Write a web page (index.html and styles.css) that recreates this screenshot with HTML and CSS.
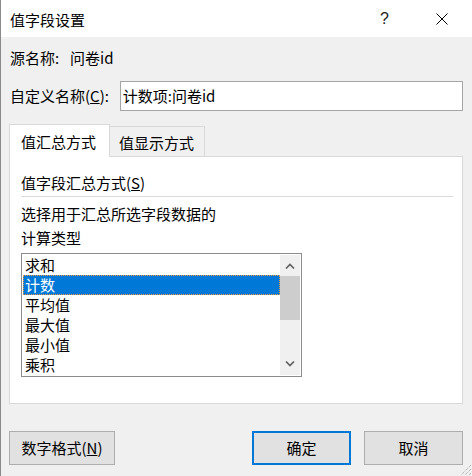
FILE: index.html
```html
<!DOCTYPE html>
<html lang="zh-CN">
<head>
<meta charset="utf-8">
<title>值字段设置</title>
<link rel="stylesheet" href="styles.css">
</head>
<body>
<div class="dialog">
  <div class="titlebar">
    <span class="title">值字段设置</span>
    <span class="help">?</span>
    <svg class="close" width="12" height="12" viewBox="0 0 12 12"><path d="M0.5 0.5 L11.5 11.5 M11.5 0.5 L0.5 11.5" stroke="#000" stroke-width="1" fill="none"/></svg>
  </div>
  <div class="content">
    <div class="src-row"><span class="src-label">源名称:</span><span>问卷id</span></div>
    <div class="name-row">
      <span class="name-label">自定义名称(<u>C</u>):</span>
      <div class="input">计数项:问卷id</div>
    </div>
    <div class="tabs">
      <div class="tab active">值汇总方式</div>
      <div class="tab inactive">值显示方式</div>
    </div>
    <div class="panel">
      <div class="sec">值字段汇总方式(<u>S</u>)</div>
      <div class="sep"></div>
      <div class="desc">选择用于汇总所选字段数据的<br>计算类型</div>
      <div class="listbox">
        <div class="items">
          <div class="item">求和</div>
          <div class="item selected">计数</div>
          <div class="item">平均值</div>
          <div class="item">最大值</div>
          <div class="item">最小值</div>
          <div class="item">乘积</div>
        </div>
        <div class="scrollbar">
          <div class="arrow up"><svg width="10" height="6" viewBox="0 0 10 6"><path d="M1 5.5 L5 1.5 L9 5.5" stroke="#606060" stroke-width="1.6" fill="none"/></svg></div>
          <div class="thumb"></div>
          <div class="track"></div>
          <div class="arrow down"><svg width="10" height="6" viewBox="0 0 10 6"><path d="M1 0.5 L5 4.5 L9 0.5" stroke="#606060" stroke-width="1.6" fill="none"/></svg></div>
        </div>
      </div>
    </div>
    <div class="buttons">
      <button class="btn fmt">数字格式(<u>N</u>)</button>
      <div class="btn-group">
        <button class="btn ok">确定</button>
        <button class="btn cancel">取消</button>
      </div>
    </div>
  </div>
  <svg class="grip" width="12" height="12" viewBox="0 0 12 12">
    <path d="M11 1 L1 11 M11 5 L5 11 M11 9 L9 11" stroke="#9a9a9a" stroke-width="1" stroke-dasharray="1 1" fill="none"/>
  </svg>
</div>
</body>
</html>
```

FILE: styles.css
```css
* { box-sizing: border-box; }
html, body { margin: 0; padding: 0; }
body {
  width: 472px;
  height: 476px;
  overflow: hidden;
  font-family: "Noto Sans CJK SC", "Noto Sans", sans-serif;
  font-size: 15px;
  color: #000;
}
.dialog {
  position: relative;
  width: 472px;
  height: 476px;
  border-left: 1px solid #8a8a8a;
  background: #f0f0f0;
}
.titlebar {
  height: 37px;
  background: #fff;
  display: flex;
  align-items: center;
  padding: 2px 0 0 9px;
}
.title { flex: 1; line-height: 20px; }
.help {
  font-family: "Liberation Sans", sans-serif;
  font-size: 16px;
  line-height: 20px;
  color: #222;
  margin-right: 47px;
  margin-top: -2px;
}
.close { margin-right: 24px; margin-top: -2px; }
.content {
  padding: 0 9px 0 8px;
}
.src-row {
  margin-top: 11px;
  height: 20px;
  line-height: 20px;
  padding-left: 1px;
  display: flex;
}
.src-label { width: 60px; }
.name-row {
  margin-top: 13px;
  height: 30px;
  display: flex;
  align-items: center;
}
.name-label {
  width: 111px;
  padding-left: 1px;
  line-height: 20px;
}
.input {
  width: 344px;
  height: 30px;
  border: 1px solid #a5a5a5;
  background: #fff;
  padding-left: 2px;
  line-height: 28px;
}
.tabs {
  margin-top: 13px;
  height: 32px;
  display: flex;
  align-items: flex-end;
}
.tab { line-height: 20px; }
.tab.active {
  position: relative;
  z-index: 1;
  width: 101px;
  height: 33px;
  margin-bottom: -1px;
  background: #fff;
  border: 1px solid #d9d9d9;
  border-bottom: none;
  padding: 7px 0 0 11px;
}
.tab.inactive {
  width: 95px;
  height: 30px;
  border-top: 1px solid #d9d9d9;
  border-right: 1px solid #d9d9d9;
  padding: 6px 0 0 9px;
}
.panel {
  height: 248px;
  background: #fff;
  border: 1px solid #d9d9d9;
  padding: 16px 9px 0 11px;
}
.sec { line-height: 20px; }
.sep {
  margin-top: 3px;
  height: 1px;
  background: #dadada;
}
.desc {
  margin-top: 5px;
  line-height: 24px;
}
.listbox {
  margin-top: 3px;
  width: 281px;
  height: 124px;
  border: 1px solid #8c8c8c;
  padding: 1px;
  display: flex;
}
.items { width: 257px; }
.item {
  height: 20px;
  line-height: 20px;
  padding-left: 2px;
}
.item.selected {
  background: #0078d7;
  color: #fff;
  outline: 1px dotted #f39a3a;
  outline-offset: -1px;
}
.scrollbar {
  width: 20px;
  height: 120px;
  background: #f0f0f0;
  display: flex;
  flex-direction: column;
}
.arrow {
  display: flex;
  align-items: center;
  justify-content: center;
}
.arrow.up { height: 21px; padding-top: 1px; }
.arrow.down { height: 20px; padding-bottom: 2px; }
.thumb { height: 44px; background: #cdcdcd; }
.track { flex: 1; }
.buttons {
  margin-top: 27px;
  display: flex;
  justify-content: space-between;
}
.btn-group { display: flex; gap: 13px; }
.btn {
  font-family: "Noto Sans CJK SC", "Noto Sans", sans-serif;
  font-size: 15px;
  color: #000;
  height: 34px;
  width: 99px;
  background: #e1e1e1;
  border: 1px solid #adadad;
  padding: 0;
  line-height: 20px;
}
.btn.fmt { width: 106px; }
.btn.ok { border: 2px solid #0078d7; }
.grip {
  position: absolute;
  right: 0;
  bottom: 0;
}
```
